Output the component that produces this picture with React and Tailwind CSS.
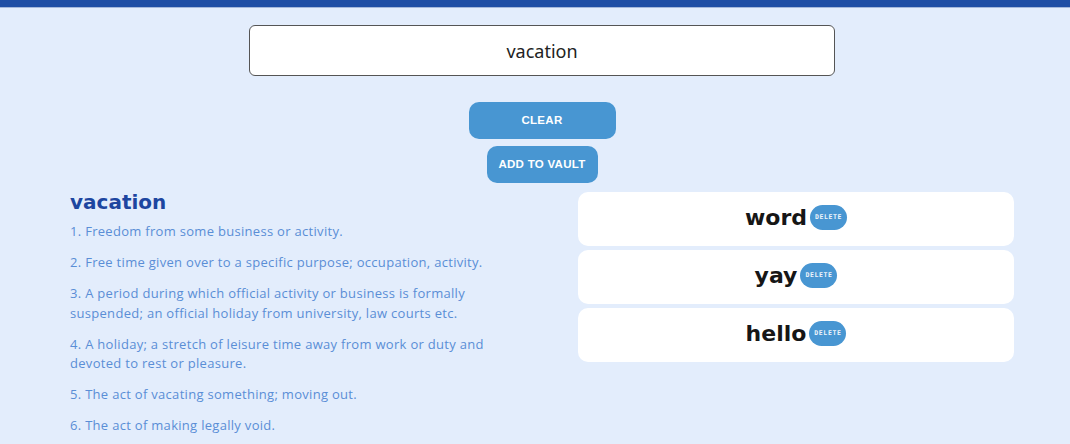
import React from "react";

const definitions = [
  "1. Freedom from some business or activity.",
  "2. Free time given over to a specific purpose; occupation, activity.",
  "3. A period during which official activity or business is formally suspended; an official holiday from university, law courts etc.",
  "4. A holiday; a stretch of leisure time away from work or duty and devoted to rest or pleasure.",
  "5. The act of vacating something; moving out.",
  "6. The act of making legally void.",
];

const vault = ["word", "yay", "hello"];

export default function App() {
  return (
    <div className="min-h-[444px] bg-[#e3edfc] font-['DejaVu_Sans',sans-serif]">
      {/* barra superior */}
      <div className="h-2 bg-[#1f4ea5] border-b border-white/60"></div>

      <div className="pl-[14px]">
        {/* buscador */}
        <div className="flex justify-center pt-[17px]">
          <input
            readOnly
            value="vacation"
            className="w-[586px] h-[51px] rounded-md border border-[#555] bg-white text-center text-[18px] text-[#222] font-['Noto_Sans',sans-serif] outline-none"
          />
        </div>

        {/* botones */}
        <div className="flex flex-col items-center gap-[7px] mt-[26px]">
          <button className="w-[147px] h-[37px] rounded-[10px] bg-[#4896d2] text-white text-[11.5px] font-bold font-['Liberation_Sans',sans-serif] tracking-wide">
            CLEAR
          </button>
          <button className="w-[111px] h-[37px] rounded-[10px] bg-[#4896d2] text-white text-[11.5px] font-bold font-['Liberation_Sans',sans-serif] tracking-wide">
            ADD TO VAULT
          </button>
        </div>
      </div>

      {/* contenido */}
      <div className="flex justify-between pl-[70px] pr-[56px] mt-[9px]">
        <div className="w-[430px]">
          <h2 className="text-[20px] font-bold text-[#1d46a0] leading-[21px]">
            vacation
          </h2>
          <div className="mt-[9px] flex flex-col gap-[11.5px]">
            {definitions.map((d) => (
              <p
                key={d}
                className="text-[13px] leading-[19.5px] tracking-[0.3px] text-[#5a8ed6] font-['Open_Sans',sans-serif]"
              >
                {d}
              </p>
            ))}
          </div>
        </div>

        <div className="w-[436px] flex flex-col gap-1">
          {vault.map((w) => (
            <div
              key={w}
              className="h-[54px] rounded-[10px] bg-white flex items-center justify-center gap-[3px] pb-[4px]"
            >
              <span className="text-[22px] font-bold text-[#161616]">{w}</span>
              <button className="w-[37px] h-[25px] rounded-full bg-[#4896d2] flex items-center justify-center leading-none text-[#eef4fb] text-[6.5px] tracking-[0.6px] font-['DejaVu_Sans_Mono',monospace] font-bold">
                DELETE
              </button>
            </div>
          ))}
        </div>
      </div>
    </div>
  );
}
